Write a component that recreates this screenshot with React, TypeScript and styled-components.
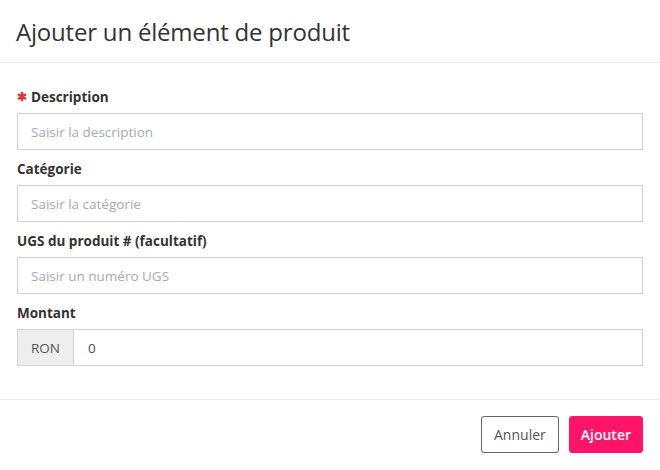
import React from 'react';
import styled, { createGlobalStyle } from 'styled-components';

const GlobalStyle = createGlobalStyle`
  * { box-sizing: border-box; }
  body {
    margin: 0;
    background: #fff;
    font-family: 'Open Sans', 'Noto Sans', sans-serif;
    color: #333;
  }
`;

const Modal = styled.div`
  width: 660px;
  height: 470px;
  display: flex;
  flex-direction: column;
  background: #fff;
`;

const Header = styled.div`
  height: 63px;
  padding: 0 17px;
  display: flex;
  align-items: center;
  border-bottom: 1px solid #ececec;
`;

const Title = styled.h4`
  margin: 0 0 0 -1px;
  font-size: 24px;
  font-weight: 400;
  color: #333;
  letter-spacing: -0.2px;
`;

const Body = styled.div`
  padding: 24px 17px 24px;
  border-bottom: 1px solid #ececec;
`;

const Group = styled.div`
  display: flex;
  flex-direction: column;
  gap: 6px;
  margin-bottom: 9px;
`;

const Label = styled.label<{ $required?: boolean }>`
  display: block;
  height: 20px;
  font-size: 13.5px;
  font-weight: 700;
  line-height: 20px;
  color: #333;
  &::before {
    content: ${(p) => (p.$required ? "'✱'" : 'none')};
    display: inline-block;
    width: 14px;
    line-height: 1;
    vertical-align: 1px;
    color: #e0363a;
    font-size: 12px;
    font-weight: 700;
  }
`;

const Input = styled.input`
  height: 37px;
  width: 100%;
  border: 1px solid #d3d3de;
  border-radius: 0;
  padding: 0 13px;
  font-family: inherit;
  font-size: 13.5px;
  color: #333;
  outline: none;
  &::placeholder {
    color: #a9a9b0;
  }
`;

const InputGroup = styled.div`
  display: flex;
  height: 37px;
  border: 1px solid #d3d3de;
`;

const Addon = styled.span`
  flex: 0 0 56px;
  display: flex;
  align-items: center;
  justify-content: center;
  background: #eeeeee;
  border-right: 1px solid #d3d3de;
  font-size: 13.5px;
  color: #555;
`;

const GroupedInput = styled(Input)`
  flex: 1;
  height: 100%;
  border: none;
  padding: 0 14px;
  color: #3b4a6b;
`;

const Footer = styled.div`
  display: flex;
  justify-content: flex-end;
  gap: 10px;
  padding: 16px 17px;
`;

const Button = styled.button<{ $primary?: boolean }>`
  height: 37px;
  padding: 0 ${(p) => (p.$primary ? 11 : 12)}px;
  border-radius: 3px;
  font-family: inherit;
  font-size: 14px;
  font-weight: ${(p) => (p.$primary ? 600 : 400)};
  border: 1px solid ${(p) => (p.$primary ? '#ff1468' : '#666')};
  background: ${(p) => (p.$primary ? '#ff1468' : '#fff')};
  color: ${(p) => (p.$primary ? '#fff' : '#555')};
  cursor: pointer;
`;

export default function App() {
  return (
    <>
      <GlobalStyle />
      <Modal>
        <Header>
          <Title>Ajouter un élément de produit</Title>
        </Header>
        <Body>
          <Group>
            <Label $required>Description</Label>
            <Input placeholder="Saisir la description" />
          </Group>
          <Group>
            <Label>Catégorie</Label>
            <Input placeholder="Saisir la catégorie" />
          </Group>
          <Group>
            <Label>UGS du produit # (facultatif)</Label>
            <Input placeholder="Saisir un numéro UGS" />
          </Group>
          <Group>
            <Label>Montant</Label>
            <InputGroup>
              <Addon>RON</Addon>
              <GroupedInput defaultValue="0" />
            </InputGroup>
          </Group>
        </Body>
        <Footer>
          <Button>Annuler</Button>
          <Button $primary>Ajouter</Button>
        </Footer>
      </Modal>
    </>
  );
}
